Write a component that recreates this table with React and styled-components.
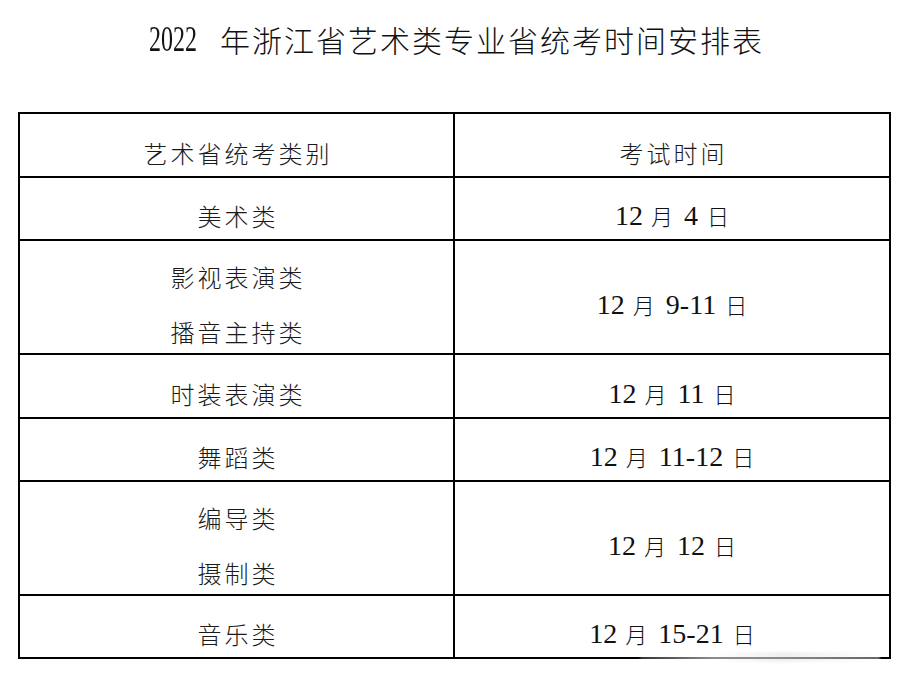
import React from "react";
import styled, { createGlobalStyle } from "styled-components";

const GlobalStyle = createGlobalStyle`
  html, body {
    margin: 0;
    padding: 0;
    background: #ffffff;
  }
  body {
    font-family: "Noto Sans CJK SC", "Liberation Serif", serif;
    color: #151515;
  }
`;

const Page = styled.div`
  width: 909px;
  height: 682px;
  box-sizing: border-box;
  padding: 0 18px;
  display: flex;
  flex-direction: column;
  overflow: hidden;
  position: relative;
`;

const Title = styled.h1`
  margin: 0;
  height: 76px;
  display: flex;
  align-items: center;
  justify-content: center;
  font-weight: 300;
  font-size: 30px;
  letter-spacing: 2px;
  color: #111;
  padding-top: 2px;
  padding-left: 4px;
  box-sizing: border-box;
`;

const TitleYear = styled.span`
  display: inline-block;
  font-family: "Liberation Serif", serif;
  font-size: 30px;
  letter-spacing: 0;
  transform: scale(0.8, 1.22);
  margin-right: 17px;
  margin-left: -6px;
`;

const Table = styled.div`
  margin-top: 36px;
  width: 873px;
  box-sizing: border-box;
  border: 2px solid #000;
  display: flex;
  flex-direction: column;
`;

const Row = styled.div`
  display: flex;
  box-sizing: border-box;
  height: ${(p) => p.$h}px;
  border-top: ${(p) => (p.$first ? "none" : "2px solid #000")};
`;

const Cell = styled.div`
  box-sizing: border-box;
  display: flex;
  flex-direction: column;
  align-items: center;
  justify-content: center;
  padding-top: 14px;
  ${(p) =>
    p.$left
      ? "width: 435px; border-right: 2px solid #000;"
      : "flex: 1;"}
`;

const Label = styled.div`
  font-family: "Noto Sans CJK SC", sans-serif;
  font-weight: 300;
  font-size: 24px;
  letter-spacing: 3px;
  line-height: 55px;
  color: #1a1a1a;
  padding-left: 3px;
`;

const DateLine = styled.div`
  display: flex;
  align-items: baseline;
  line-height: 40px;
  color: #111;
`;

const Num = styled.span`
  font-family: "Liberation Serif", serif;
  font-size: 28px;
`;

const Unit = styled.span`
  font-family: "Noto Sans CJK SC", sans-serif;
  font-weight: 300;
  font-size: 22px;
  margin: ${(p) => (p.$end ? "0 0 0 9px" : "0 11px 0 8px")};
`;

const Watermark = styled.div`
  position: absolute;
  left: 640px;
  top: 652px;
  width: 240px;
  height: 10px;
  background: linear-gradient(
    90deg,
    rgba(255, 255, 255, 0.2),
    rgba(255, 255, 255, 0.55) 30%,
    rgba(230, 230, 230, 0.6) 60%,
    rgba(255, 255, 255, 0.4)
  );
  filter: blur(1px);
`;

function DateText({ month, day }) {
  return (
    <DateLine>
      <Num>{month}</Num>
      <Unit>月</Unit>
      <Num>{day}</Num>
      <Unit $end>日</Unit>
    </DateLine>
  );
}

const rows = [
  { h: 63, labels: ["美术类"], day: "4" },
  { h: 114, labels: ["影视表演类", "播音主持类"], day: "9-11" },
  { h: 64, labels: ["时装表演类"], day: "11" },
  { h: 63, labels: ["舞蹈类"], day: "11-12" },
  { h: 114, labels: ["编导类", "摄制类"], day: "12" },
  { h: 63, labels: ["音乐类"], day: "15-21" },
];

export default function App() {
  return (
    <>
      <GlobalStyle />
      <Page>
        <Title>
          <TitleYear>2022</TitleYear>年浙江省艺术类专业省统考时间安排表
        </Title>
        <Table>
          <Row $h={62} $first>
            <Cell $left>
              <Label>艺术省统考类别</Label>
            </Cell>
            <Cell>
              <Label>考试时间</Label>
            </Cell>
          </Row>
          {rows.map((r, i) => (
            <Row key={i} $h={r.h}>
              <Cell $left>
                {r.labels.map((l) => (
                  <Label key={l}>{l}</Label>
                ))}
              </Cell>
              <Cell>
                <DateText month="12" day={r.day} />
              </Cell>
            </Row>
          ))}
        </Table>
        <Watermark />
      </Page>
    </>
  );
}
